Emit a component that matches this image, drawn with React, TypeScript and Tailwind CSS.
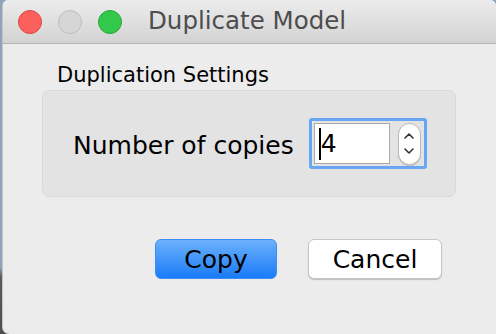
const font = { fontFamily: '"DejaVu Sans", "Liberation Sans", sans-serif' };

function TrafficLights() {
  return (
    <div className="flex items-center gap-[16px]">
      <span className="block w-[24px] h-[24px] rounded-full bg-[#fc605c] border border-[#e0443e]" />
      <span className="block w-[24px] h-[24px] rounded-full bg-[#d6d6d6] border border-[#bdbdbd]" />
      <span className="block w-[24px] h-[24px] rounded-full bg-[#34c84a] border border-[#25a93a]" />
    </div>
  );
}

function Stepper() {
  return (
    <div className="w-[23px] h-[42px] rounded-full bg-white border border-[#b9b9b9] shadow-[0_1px_1px_rgba(0,0,0,0.15)] flex flex-col items-center justify-center gap-[9px]">
      <svg width="10" height="6" viewBox="0 0 10 6" fill="none">
        <path d="M1 5 L5 1 L9 5" stroke="#333" strokeWidth="1.6" strokeLinecap="round" strokeLinejoin="round" />
      </svg>
      <svg width="10" height="6" viewBox="0 0 10 6" fill="none">
        <path d="M1 1 L5 5 L9 1" stroke="#333" strokeWidth="1.6" strokeLinecap="round" strokeLinejoin="round" />
      </svg>
    </div>
  );
}

export default function App() {
  return (
    <div
      className="w-[496px] h-[334px] flex overflow-hidden bg-[linear-gradient(to_bottom,#8ea4bc_0%,#8ea4bc_80%,#5b5b5b_83%,#4f4f4f_100%)]"
      style={font}
    >
      <div className="w-[2px] shrink-0" />
      {/* Dialog window */}
      <div className="flex-1 flex flex-col rounded-t-[6px] rounded-bl-[7px] overflow-hidden bg-[#ececec] border-l border-[#c4c4c4]">
        {/* Title bar */}
        <div className="h-[44px] shrink-0 flex items-center pl-[15px] bg-[linear-gradient(to_bottom,#ececec,#d3d3d3)] border-b border-[#b3b3b3]">
          <TrafficLights />
          <span className="ml-[26px] text-[24.5px] leading-none text-[#4d4d4d] pb-[1px]">Duplicate Model</span>
        </div>

        {/* Body */}
        <div className="flex-1 flex flex-col">
          <div className="mt-[19px] pl-[54px] text-[21px] leading-[24px] text-black">Duplication Settings</div>

          <div className="mt-[3px] ml-[39px] w-[414px] h-[107px] rounded-[7px] bg-[#e3e3e3] border border-[#dadada] flex items-center pl-[30px] gap-[15px]">
            <span className="text-[25px] leading-none text-black mt-[3px]">Number of copies</span>
            <div className="w-[118px] h-[51px] rounded-[3px] border-[3px] border-[#66a6f2] flex items-center pl-[2px] gap-[8px]">
              <div className="w-[76px] h-[41px] bg-white border border-[#a9a9a9] flex items-center pl-[4px]">
                <span className="block w-[2px] h-[32px] bg-black" />
                <span className="text-[25px] leading-none text-black">4</span>
              </div>
              <Stepper />
            </div>
          </div>

          <div className="mt-[42px] pl-[152px] flex gap-[31px]">
            <button className="w-[122px] h-[40px] rounded-[6px] border border-[#3d8cf5] bg-[linear-gradient(to_bottom,#6cb1fc,#1a7bf8)] text-[25px] leading-none text-black flex items-center justify-center">
              Copy
            </button>
            <button className="w-[134px] h-[40px] rounded-[6px] bg-white border border-[#c6c6c6] shadow-[0_1px_1px_rgba(0,0,0,0.2)] text-[25px] leading-none text-black flex items-center justify-center">
              Cancel
            </button>
          </div>
        </div>
      </div>
    </div>
  );
}
